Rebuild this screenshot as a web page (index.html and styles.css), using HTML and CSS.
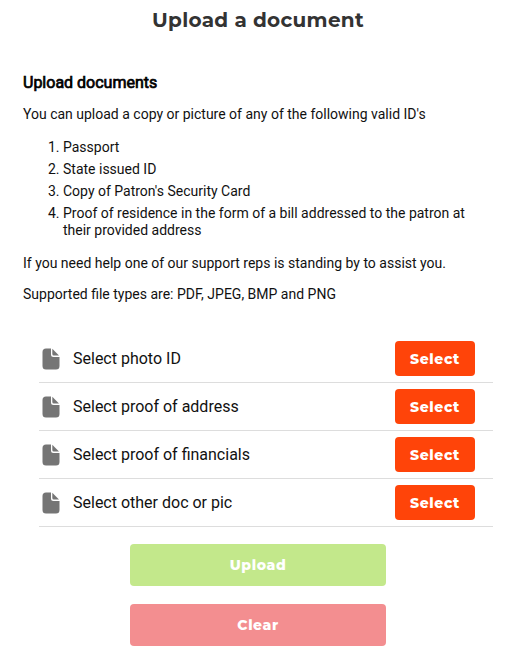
FILE: index.html
```html
<!DOCTYPE html>
<html lang="en">
<head>
    <meta charset="UTF-8">
    <meta name="viewport" content="width=device-width, initial-scale=1.0">
    <title>Upload a document</title>
    <link rel="stylesheet" href="styles.css">
</head>
<body>

    <svg class="sprite" width="0" height="0">
        <symbol id="file" viewBox="0 0 18 22">
            <path d="M4 0.5H9V6.5Q9 9 11.5 9H17.5V18Q17.5 21.5 14 21.5H4Q0.5 21.5 0.5 18V4Q0.5 0.5 4 0.5Z"/>
            <path d="M10.3 0.8L17 7.6H11.8Q10.3 7.6 10.3 6.1Z"/>
        </symbol>
    </svg>

    <div class="page">
        <h1 class="title">Upload a document</h1>

        <div class="info">
            <h2>Upload documents</h2>
            <p>You can upload a copy or picture of any of the following valid ID's</p>
            <ol>
                <li>Passport</li>
                <li>State issued ID</li>
                <li>Copy of Patron's Security Card</li>
                <li>Proof of residence in the form of a bill addressed to the patron at their provided address</li>
            </ol>
            <p>If you need help one of our support reps is standing by to assist you.</p>
            <p>Supported file types are: PDF, JPEG, BMP and PNG</p>
        </div>

        <div class="files">
            <div class="file-row">
                <svg class="icon"><use href="#file"/></svg>
                <span class="label">Select photo ID</span>
                <button class="button select">Select</button>
            </div>
            <div class="file-row">
                <svg class="icon"><use href="#file"/></svg>
                <span class="label">Select proof of address</span>
                <button class="button select">Select</button>
            </div>
            <div class="file-row">
                <svg class="icon"><use href="#file"/></svg>
                <span class="label">Select proof of financials</span>
                <button class="button select">Select</button>
            </div>
            <div class="file-row">
                <svg class="icon"><use href="#file"/></svg>
                <span class="label">Select other doc or pic</span>
                <button class="button select">Select</button>
            </div>
        </div>

        <div class="actions">
            <button class="button upload" disabled>Upload</button>
            <button class="button clear" disabled>Clear</button>
        </div>
    </div>

</body>
</html>
```
FILE: styles.css
```css
body {
    margin: 0;
    background: #fff;
    color: #111;
    font-family: Roboto, sans-serif;
    font-size: 14px;
    line-height: 17px;
}

.sprite {
    display: block;
}

.title {
    margin: 0 0 0 7px;
    height: 40px;
    line-height: 40px;
    text-align: center;
    font-family: Montserrat, Inter, sans-serif;
    font-size: 20px;
    font-weight: 700;
    letter-spacing: 0.28px;
    color: #333;
}

.info {
    padding: 33px 23px 0;
}

.info h2 {
    margin: 0;
    font-size: 16px;
    font-weight: 400;
    line-height: 20px;
    color: #000;
    -webkit-text-stroke: 0.7px #000;
}

.info p {
    margin: 13px 0 14px;
}

.info ol {
    margin: 16px 0;
    padding-left: 40px;
}

.info li {
    margin-bottom: 5px;
}

.files {
    margin: 32px 16px 0 39px;
}

.file-row {
    display: flex;
    align-items: center;
    box-sizing: border-box;
    height: 48px;
    padding: 0 18px 0 3px;
    border-bottom: 1px solid #ddd;
}

.icon {
    width: 18px;
    height: 22px;
    fill: #757575;
}

.label {
    flex: 1;
    margin-left: 13px;
    font-size: 16px;
    line-height: 20px;
}

.button {
    padding: 0;
    border: none;
    border-radius: 4px;
    font-family: Montserrat, Inter, sans-serif;
    font-size: 14px;
    font-weight: 800;
    letter-spacing: 0.6px;
    color: #fff;
    cursor: pointer;
}

.select {
    width: 80px;
    height: 35px;
    background: #ff4409;
}

.actions {
    display: flex;
    flex-direction: column;
    align-items: center;
    gap: 18px;
    margin: 17px 0 0 7px;
}

.actions .button {
    width: 256px;
    height: 42px;
}

.upload {
    background: #c3e88b;
}

.clear {
    background: #f38e90;
}
```
